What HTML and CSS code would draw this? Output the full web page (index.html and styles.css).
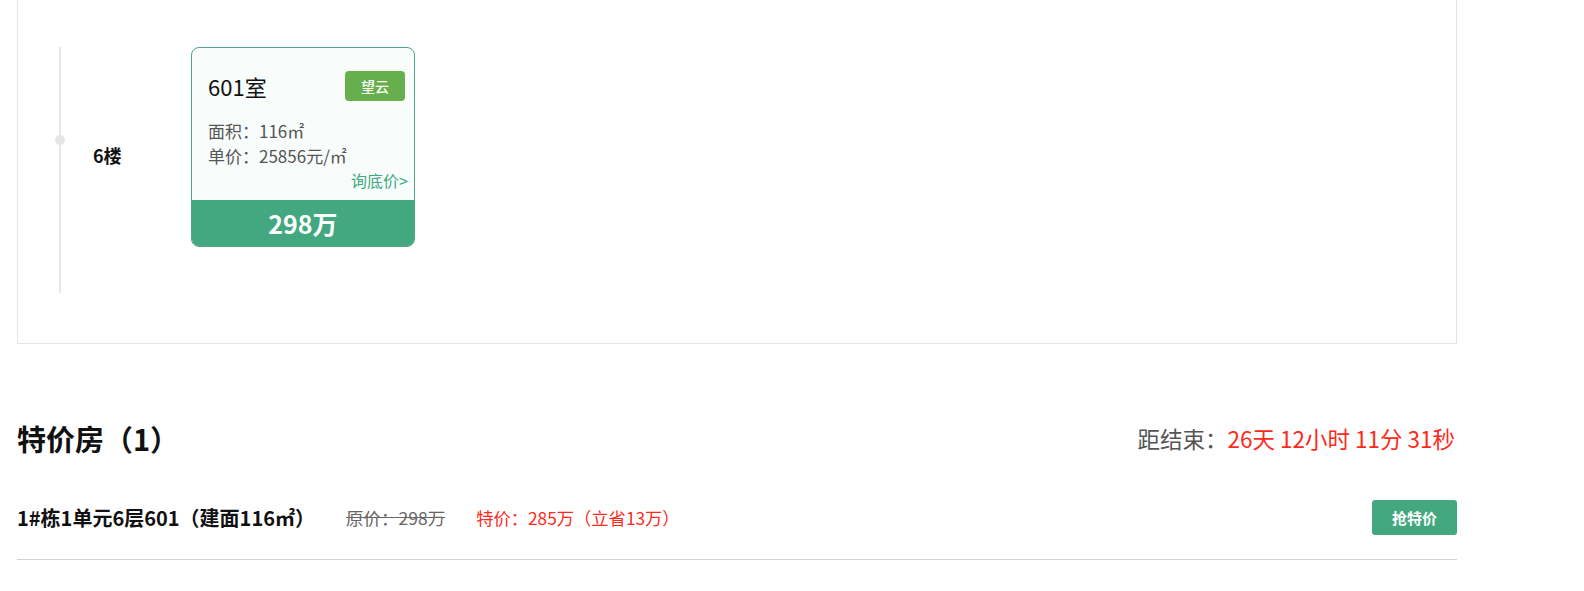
FILE: index.html
```html
<!DOCTYPE html>
<html lang="zh">
<head>
    <meta charset="UTF-8">
    <meta name="viewport" content="width=device-width, initial-scale=1.0">
    <title>楼盘房源</title>
    <link rel="stylesheet" href="styles.css">
</head>
<body>
<div class="page">
    <div class="floor-box">
        <div class="floor-row">
            <div class="floor-axis"></div>
            <div class="floor-name">6楼</div>
            <div class="room-card">
                <div class="room-body">
                    <div class="room-head">
                        <span class="room-no">601室</span>
                        <span class="room-tag">望云</span>
                    </div>
                    <div class="room-info">
                        <p>面积：116㎡</p>
                        <p>单价：25856元/㎡</p>
                        <p class="room-ask">询底价&gt;</p>
                    </div>
                </div>
                <div class="room-price">298万</div>
            </div>
        </div>
    </div>

    <div class="special">
        <div class="special-head">
            <h2>特价房（1）</h2>
            <div class="countdown">距结束：<span class="countdown-time">26天 12小时 11分 31秒</span></div>
        </div>
        <div class="special-row">
            <span class="special-title">1#栋1单元6层601（建面116㎡）</span>
            <span class="special-old">原价：298万</span>
            <span class="special-new">特价：285万（立省13万）</span>
            <button class="special-btn">抢特价</button>
        </div>
    </div>
</div>
</body>
</html>
```

FILE: styles.css
```css
body {
    margin: 0;
    font-family: "Noto Sans CJK SC", "Noto Sans", sans-serif;
    color: #222;
    background: #fff
}

p {
    margin: 0
}

.page {
    width: 1440px;
    margin-left: 17px
}

.floor-box {
    margin-top: -1px;
    border: 1px solid #e5e5e5;
    padding: 47px 0 50px 41px
}

.floor-row {
    display: flex;
    align-items: flex-start
}

.floor-axis {
    position: relative;
    width: 2px;
    height: 246px;
    background: #e8e8e8
}

.floor-axis::before {
    content: "";
    position: absolute;
    left: -4px;
    top: 88px;
    width: 10px;
    height: 10px;
    border-radius: 50%;
    background: #e5e5e5
}

.floor-name {
    width: 98px;
    margin-left: 32px;
    margin-top: 95px;
    font-size: 18px;
    line-height: 26px;
    font-weight: bold;
    color: #111
}

.room-card {
    width: 224px;
    box-sizing: border-box;
    border: 1px solid #4fa883;
    border-radius: 8px;
    overflow: hidden;
    background: #f8fdfb
}

.room-body {
    padding: 23px 6px 7px 16px
}

.room-head {
    display: flex;
    justify-content: space-between;
    align-items: center;
    height: 30px;
    padding-right: 3px
}

.room-no {
    font-size: 22px;
    color: #111
}

.room-tag {
    width: 60px;
    height: 30px;
    line-height: 30px;
    text-align: center;
    border-radius: 4px;
    background: #67af4d;
    color: #fff;
    font-size: 14px;
    font-weight: 500
}

.room-info {
    margin-top: 17px;
    font-size: 17px;
    line-height: 25px;
    color: #555
}

.room-ask {
    text-align: right;
    font-size: 16px;
    color: #43a880
}

.room-price {
    height: 46px;
    line-height: 46px;
    text-align: center;
    background: #43a880;
    color: #fff;
    font-size: 25px;
    font-weight: bold
}

.special {
    margin-top: 74px
}

.special-head {
    display: flex;
    justify-content: space-between;
    align-items: center;
    height: 40px
}

.special-head h2 {
    margin: 0;
    font-size: 29px;
    font-weight: bold;
    color: #111
}

.countdown {
    font-size: 22.5px;
    color: #555;
    padding-right: 2px
}

.countdown-time {
    color: #fd2a1b
}

.special-row {
    display: flex;
    align-items: center;
    margin-top: 42px;
    padding-bottom: 24px;
    border-bottom: 1px solid #d3d3d3
}

.special-title {
    font-size: 20px;
    font-weight: bold;
    color: #111
}

.special-old {
    margin-left: 31px;
    font-size: 17.5px;
    color: #666;
    text-decoration: line-through
}

.special-new {
    margin-left: 31px;
    font-size: 17.3px;
    color: #fd2a1b
}

.special-btn {
    margin-left: auto;
    width: 85px;
    height: 35px;
    border: none;
    border-radius: 3px;
    background: #43a880;
    color: #fff;
    font-family: inherit;
    font-size: 15px;
    font-weight: bold;
    cursor: pointer
}
```
